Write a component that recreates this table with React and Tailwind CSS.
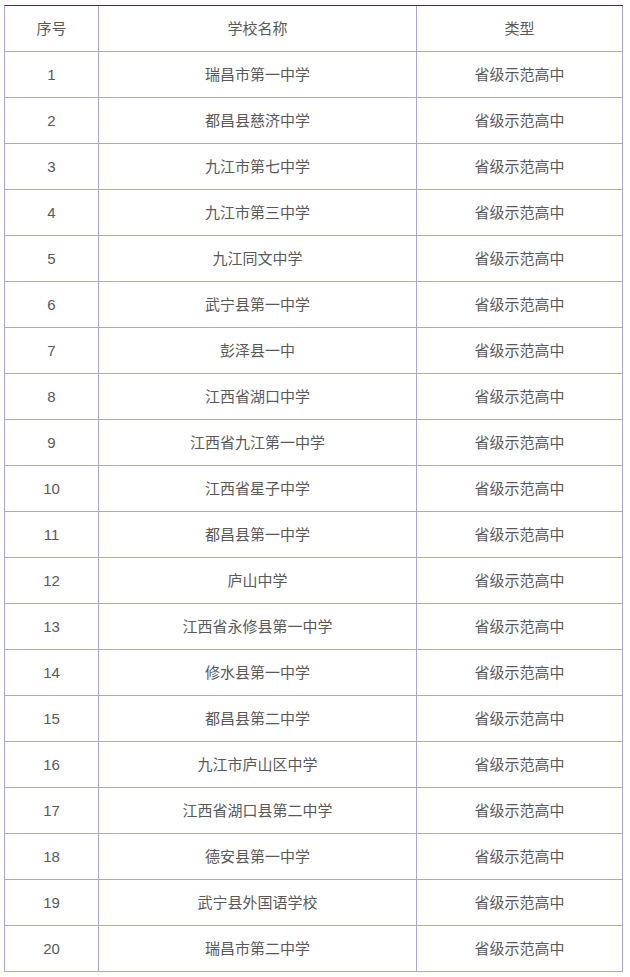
const rows = [
  ["1", "瑞昌市第一中学"],
  ["2", "都昌县慈济中学"],
  ["3", "九江市第七中学"],
  ["4", "九江市第三中学"],
  ["5", "九江同文中学"],
  ["6", "武宁县第一中学"],
  ["7", "彭泽县一中"],
  ["8", "江西省湖口中学"],
  ["9", "江西省九江第一中学"],
  ["10", "江西省星子中学"],
  ["11", "都昌县第一中学"],
  ["12", "庐山中学"],
  ["13", "江西省永修县第一中学"],
  ["14", "修水县第一中学"],
  ["15", "都昌县第二中学"],
  ["16", "九江市庐山区中学"],
  ["17", "江西省湖口县第二中学"],
  ["18", "德安县第一中学"],
  ["19", "武宁县外国语学校"],
  ["20", "瑞昌市第二中学"],
];

function Row({ a, b, c }) {
  const cell = "flex items-center justify-center h-[46px] pt-[2px] border-r border-b border-[#aaa6d6]";
  return (
    <div className="grid grid-cols-[94px_318px_206px]">
      <div className={cell}>{a}</div>
      <div className={cell}>{b}</div>
      <div className={cell}>{c}</div>
    </div>
  );
}

export default function App() {
  return (
    <div className="bg-white w-[630px] h-[977px] pt-[5px] pl-[4px] font-['Liberation_Sans','Noto_Sans_CJK_SC',sans-serif]">
      <div className="w-[619px] border-l border-[#aaa6d6] border-t border-t-[#b00000] text-[15px] text-[#595959]">
        <Row a="序号" b="学校名称" c="类型" />
        {rows.map((r) => (
          <Row key={r[0]} a={r[0]} b={r[1]} c="省级示范高中" />
        ))}
      </div>
    </div>
  );
}
